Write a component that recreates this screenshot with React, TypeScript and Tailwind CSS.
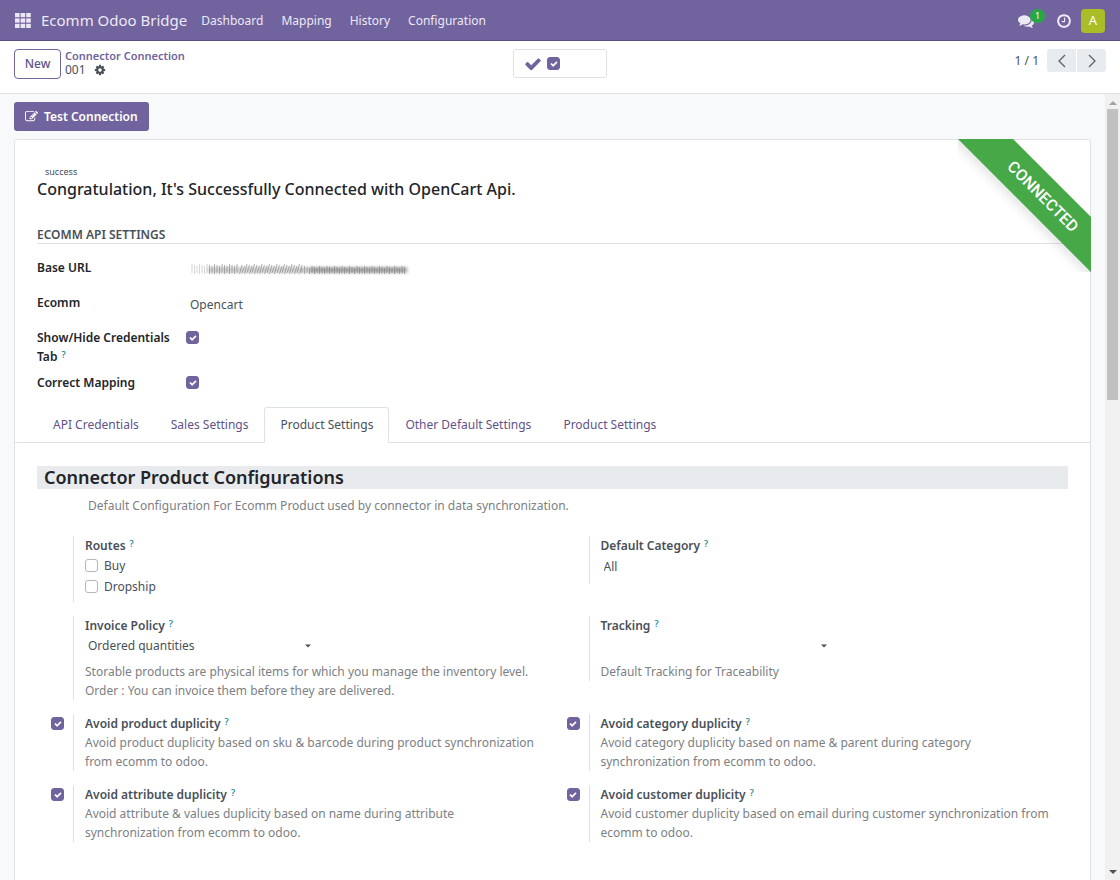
import { useId, useState } from 'react';
import type { ReactNode } from 'react';

const iconPaths = {
  edit: 'M888 1184l116-116-152-152-116 116v56h96v96h56zm440-720q-16-16-33 1l-350 350q-17 17-1 33t33-1l350-350q17-17 1-33zm80 594v190q0 119-84.5 203.5t-203.5 84.5h-832q-119 0-203.5-84.5t-84.5-203.5v-832q0-119 84.5-203.5t203.5-84.5h832q63 0 117 25 15 7 18 23 3 17-9 29l-49 49q-14 14-32 8-23-6-45-6h-832q-66 0-113 47t-47 113v832q0 66 47 113t113 47h832q66 0 113-47t47-113v-126q0-13 9-22l64-64q15-15 35-7t20 29zm-96-738l288 288-672 672h-288v-288zm444 132l-92 92-288-288 92-92q28-28 68-28t68 28l152 152q28 28 28 68t-28 68z',
  check:
    'M1671 566q0 40-28 68l-724 724-136 136q-28 28-68 28t-68-28l-136-136-362-362q-28-28-28-68t28-68l136-136q28-28 68-28t68 28l294 295 656-657q28-28 68-28t68 28l136 136q28 28 28 68z',
  clock:
    'M1024 544v448q0 14-9 23t-23 9h-320q-14 0-23-9t-9-23v-64q0-14 9-23t23-9h224v-352q0-14 9-23t23-9h64q14 0 23 9t9 23zm416 352q0-148-73-273t-198-198-273-73-273 73-198 198-73 273 73 273 198 198 273 73 273-73 198-198 73-273zm224 0q0 209-103 385.5t-279.5 279.5-385.5 103-385.5-103-279.5-279.5-103-385.5 103-385.5 279.5-279.5 385.5-103 385.5 103 279.5 279.5 103 385.5z',
  cog: 'M1152 896q0-106-75-181t-181-75-181 75-75 181 75 181 181 75 181-75 75-181zm512-109v222q0 12-8 23t-20 13l-185 28q-19 54-39 91 35 50 107 138 10 12 10 25t-9 23q-27 37-99 108t-94 71q-12 0-26-9l-138-108q-44 23-91 38-16 136-29 186-7 28-36 28h-222q-14 0-24.5-8.5t-11.5-21.5l-28-184q-49-16-90-37l-141 107q-10 9-25 9-14 0-25-11-126-114-165-168-7-10-7-23 0-12 8-23 15-21 51-66.5t54-70.5q-27-50-41-99l-183-27q-13-2-21-12.5t-8-23.5v-222q0-12 8-23t19-13l186-28q14-46 39-92-40-57-107-138-10-12-10-24 0-10 9-23 26-36 98.5-107.5t94.5-71.5q13 0 26 10l138 107q44-23 91-38 16-136 29-186 7-28 36-28h222q14 0 24.5 8.5t11.5 21.5l28 184q49 16 90 37l142-107q9-9 24-9 13 0 25 10 129 119 165 170 7 8 7 22 0 12-8 23-15 21-51 66.5t-54 70.5q26 50 41 98l183 28q13 2 21 12.5t8 23.5z',
  comments:
    'M1408 768q0 139-94 257t-256.5 186.5-353.5 68.5q-86 0-176-16-124 88-278 128-36 9-86 16h-3q-11 0-20.5-8t-11.5-21q-1-3-1-6.5t.5-6.5 2-6l2.5-5 3.5-5.5 4-5 4.5-5 4-4.5q5-6 23-25t26-29.5 22.5-29 25-38.5 20.5-44q-124-72-195-177t-71-224q0-139 94-257t256.5-186.5 353.5-68.5 353.5 68.5 256.5 186.5 94 257zm384 256q0 120-71 224.5t-195 176.5q10 24 20.5 44t25 38.5 22.5 29 26 29.5 23 25q1 1 4 4.5t4.5 5 4 5 3.5 5.5l2.5 5 2 6 .5 6.5-1 6.5q-3 14-13 22t-22 7q-50-7-86-16-154-40-278-128-90 16-176 16-271 0-472-132 58 4 88 4 161 0 309-45t264-129q125-92 192-212t67-254q0-77-23-152 129 71 204 178t75 230z',
};

function Icon({ name, className }: { name: keyof typeof iconPaths; className: string }) {
  return (
    <svg viewBox="0 0 1792 1792" fill="currentColor" aria-hidden className={className}>
      <path d={iconPaths[name]} />
    </svg>
  );
}

function Caret({ className }: { className: string }) {
  return (
    <svg viewBox="0 0 8 4" fill="currentColor" aria-hidden className={className}>
      <path d="M0 0h8L4 4z" />
    </svg>
  );
}

function Checkbox({ id, label, on = false }: { id?: string; label?: string; on?: boolean }) {
  const [checked, setChecked] = useState(on);
  return (
    <span className="grid size-[13px] shrink-0 place-items-center">
      <input
        id={id}
        type="checkbox"
        aria-label={label}
        checked={checked}
        onChange={(e) => setChecked(e.target.checked)}
        className="col-start-1 row-start-1 size-[13px] appearance-none rounded-[3px] border border-[#b4b8bd] bg-white checked:border-[#71639e] checked:bg-[#71639e]"
      />
      {checked ? (
        <Icon name="check" className="pointer-events-none col-start-1 row-start-1 size-2 text-white" />
      ) : null}
    </span>
  );
}

function Help() {
  return <sup className="-top-[3px] ml-1 text-[9px] font-medium text-[#01808f]">?</sup>;
}

const menus = ['Dashboard', 'Mapping', 'History', 'Configuration'];

function Navbar() {
  return (
    <header className="flex h-[41px] shrink-0 items-center border-b border-[#5a4f7f] bg-[#71639e] px-[15px] pt-px text-[#ece9f5]">
      <button type="button" aria-label="Apps">
        <svg viewBox="0 0 16 15" fill="currentColor" className="h-[15px] w-4">
          {[0, 5.4, 10.8].map((y) =>
            [0, 5.6, 11.2].map((x) => <rect key={`${x}-${y}`} x={x} y={y} width="4.6" height="4.2" />),
          )}
        </svg>
      </button>
      <a href="#home" className="ml-[10px] text-[15px]">
        Ecomm Odoo Bridge
      </a>
      <nav className="ml-[14px] flex gap-[18px]">
        {menus.map((m) => (
          <a key={m} href={`#${m.toLowerCase()}`}>
            {m}
          </a>
        ))}
      </nav>
      <div className="ml-auto flex items-center gap-[13px]">
        <button type="button" aria-label="Messages" className="relative flex w-[25px]">
          <Icon name="comments" className="size-4" />
          <span className="absolute -top-1 left-3 flex h-[14px] w-[15px] items-center justify-center rounded-full bg-[#28a745] text-[9px] text-white">
            1
          </span>
        </button>
        <button type="button" aria-label="Activities">
          <Icon name="clock" className="size-4" />
        </button>
        <button
          type="button"
          className="-ml-1 flex size-6 items-center justify-center rounded bg-[#a9be26] text-[13px] text-white"
        >
          A
        </button>
      </div>
    </header>
  );
}

const pagerClass = 'flex h-[23px] w-[29px] items-center justify-center bg-[#e9ecef] text-[#5c6166]';

function ControlPanel() {
  return (
    <div className="grid h-[53px] shrink-0 grid-cols-3 items-start border-b border-[#dee2e6] bg-white px-[14px] pt-2">
      <div className="flex">
        <button
          type="button"
          className="h-[30px] w-[47px] rounded border border-[#71639e] font-medium text-[#5f5389]"
        >
          New
        </button>
        <div className="ml-1 leading-[14px]">
          <a href="#connections" className="block text-[11px] font-semibold text-[#71639e]">
            Connector Connection
          </a>
          <div className="flex items-center gap-2">
            001
            <button type="button" aria-label="Actions">
              <Icon name="cog" className="size-3" />
            </button>
          </div>
        </div>
      </div>
      <div className="flex h-[29px] w-[94px] items-center gap-[5px] justify-self-center rounded-[3px] border border-[#dee2e6] pl-[10px]">
        <Icon name="check" className="size-[18px] text-[#71639e]" />
        <Checkbox label="Connected" on />
      </div>
      <div className="flex items-center justify-end">
        <span className="mr-2">1 / 1</span>
        <button type="button" aria-label="Previous" className={`${pagerClass} rounded-l-[3px]`}>
          <svg viewBox="0 0 8 14" fill="none" stroke="currentColor" strokeWidth="1.3" className="h-[14px] w-2">
            <path d="M7 1L1 7l6 6" />
          </svg>
        </button>
        <button type="button" aria-label="Next" className={`${pagerClass} ml-px rounded-r-[3px]`}>
          <svg viewBox="0 0 8 14" fill="none" stroke="currentColor" strokeWidth="1.3" className="h-[14px] w-2">
            <path d="M1 1l6 6-6 6" />
          </svg>
        </button>
      </div>
    </div>
  );
}

function Ribbon() {
  return (
    <div className="absolute -top-px -right-px size-[133px] overflow-hidden">
      <div className="absolute top-[38px] -left-[35px] flex h-[39px] w-[240px] rotate-45 items-center justify-center bg-[#46a846] font-[Roboto,sans-serif] text-[16px] font-medium text-white shadow-[0_5px_10px_rgba(0,0,0,0.1)]">
        CONNECTED
      </div>
    </div>
  );
}

function MaskedUrl() {
  return (
    <svg viewBox="0 0 224 14" role="img" aria-label="Hidden URL" className="h-[14px] w-56">
      <filter id="smear" filterUnits="userSpaceOnUse" x="0" y="0" width="224" height="14">
        <feGaussianBlur stdDeviation="0.5" />
      </filter>
      <filter id="haze" filterUnits="userSpaceOnUse" x="0" y="0" width="224" height="14">
        <feGaussianBlur stdDeviation="1.6" />
      </filter>
      <path d="M18 8H218" stroke="#8a8a8a" strokeWidth="6" opacity="0.4" filter="url(#haze)" />
      <path d="M120 8H216" stroke="#777" strokeWidth="5" opacity="0.45" filter="url(#haze)" />
      <g stroke="#777" filter="url(#smear)">
        {Array.from({ length: 86 }, (_, i) => {
          const x = 2 + i * 2.5;
          const lean = i > 18 && i < 44 ? 2.5 : 0;
          const top = i < 44 ? 2 + (i % 3) : 4 + ((i * 7) % 3);
          return (
            <path
              key={i}
              d={`M${x + lean} ${top}L${x} ${11 + (i % 2)}`}
              strokeWidth="1"
              opacity={i < 7 ? 0.3 : 0.55}
            />
          );
        })}
      </g>
    </svg>
  );
}

const tabs = ['API Credentials', 'Sales Settings', 'Product Settings', 'Other Default Settings', 'Product Settings'];

function Tabs() {
  const [active, setActive] = useState(2);
  return (
    <div role="tablist" className="flex h-9 border-b border-[#dee2e6] pl-[22px]">
      {tabs.map((tab, i) => (
        <button
          key={i}
          type="button"
          role="tab"
          aria-selected={i === active}
          onClick={() => setActive(i)}
          className={
            i === active
              ? '-mb-px rounded-t-[3px] border border-b-0 border-[#dee2e6] bg-white px-[15px] pb-px text-[#495057]'
              : 'border border-transparent px-[15px] text-[#5f5389]'
          }
        >
          {tab}
        </button>
      ))}
    </div>
  );
}

const labelClass = 'font-semibold leading-[19px] text-[#495057]';
const hintClass = 'leading-[19px] whitespace-pre-line text-[#7c8084]';

function Setting({ toggle, children }: { toggle?: ReactNode; children: ReactNode }) {
  return (
    <div className="flex items-start">
      <div className="flex w-9 shrink-0 justify-center pt-[3px] pl-[5px]">{toggle}</div>
      <div className="min-w-0 flex-1 border-l border-[#dee2e6] pl-[11px]">{children}</div>
    </div>
  );
}

function ToggleSetting({ title, hint }: { title: string; hint: string }) {
  const id = useId();
  return (
    <Setting toggle={<Checkbox id={id} on />}>
      <label htmlFor={id} className={`${labelClass} block`}>
        {title}
        <Help />
      </label>
      <p className={hintClass}>{hint}</p>
    </Setting>
  );
}

function SelectSetting({ title, options, hint }: { title: string; options: string[]; hint: string }) {
  const id = useId();
  return (
    <Setting>
      <label htmlFor={id} className={`${labelClass} block`}>
        {title}
        <Help />
      </label>
      <div className="grid w-[230px] items-center">
        <select
          id={id}
          className="col-start-1 row-start-1 h-[22px] w-full appearance-none bg-transparent pl-[3px] text-[#495057]"
        >
          {options.map((o) => (
            <option key={o}>{o}</option>
          ))}
        </select>
        <Caret className="pointer-events-none col-start-1 row-start-1 mr-1 h-1 w-[6px] justify-self-end" />
      </div>
      <p className={`${hintClass} mt-[5px]`}>{hint}</p>
    </Setting>
  );
}

function CheckOption({ label }: { label: string }) {
  return (
    <label className="flex h-[21px] items-center gap-[6px] text-[#495057]">
      <Checkbox />
      {label}
    </label>
  );
}

function Scrollbar() {
  return (
    <div aria-hidden className="flex w-[15px] shrink-0 flex-col items-center bg-[#f1f1f1]">
      <Caret className="mt-[7px] mb-1 h-1 w-2 rotate-180 text-[#a3a3a3]" />
      <div className="h-[37%] w-[11px] bg-[#c1c1c1]" />
      <Caret className="mt-auto mb-[6px] h-1 w-2 text-[#505050]" />
    </div>
  );
}

export default function App() {
  const credentialsId = useId();
  const mappingId = useId();
  const categoryId = useId();

  return (
    <div className="flex h-screen flex-col overflow-hidden bg-[#f8f9fa] font-['Noto_Sans',sans-serif] text-[12px] text-[#495057]">
      <Navbar />
      <ControlPanel />
      <div className="flex min-h-0 flex-1">
        <main className="min-w-0 flex-1 overflow-hidden px-[14px] pt-2">
          <button
            type="button"
            className="flex h-[29px] items-center gap-[6px] rounded-[3px] bg-[#71639e] px-[11px] font-semibold text-white"
          >
            <Icon name="edit" className="size-[13px]" />
            Test Connection
          </button>

          <section className="relative mt-2 min-h-full rounded-[3px] border border-[#dee2e6] bg-white">
            <Ribbon />
            <div className="px-[22px] pt-[25px]">
              <p className="pl-2 text-[9px] leading-[14px]">success</p>
              <h1 className="text-[16px] leading-5 font-medium text-[#212529]">
                Congratulation, It's Successfully Connected with OpenCart Api.
              </h1>
              <h2 className="mt-[27px] border-b border-[#dee2e6] text-[12px] leading-[17px] font-semibold text-[#495057]">
                ECOMM API SETTINGS
              </h2>

              <dl className="mt-[14px] grid grid-cols-[149px_1fr] leading-[19px]">
                <dt className="h-[35px] font-semibold text-[#212529]">Base URL</dt>
                <dd className="pt-1 pl-1">
                  <MaskedUrl />
                </dd>
                <dt className="h-[35px] font-semibold text-[#212529]">Ecomm</dt>
                <dd className="pt-[2px] pl-1">Opencart</dd>
                <dt className="h-[45px] pr-2 font-semibold text-[#212529]">
                  <label htmlFor={credentialsId}>
                    Show/Hide Credentials Tab
                    <Help />
                  </label>
                </dt>
                <dd className="pt-[3px]">
                  <Checkbox id={credentialsId} on />
                </dd>
                <dt className="h-[34px] font-semibold text-[#212529]">
                  <label htmlFor={mappingId}>Correct Mapping</label>
                </dt>
                <dd className="pt-[3px]">
                  <Checkbox id={mappingId} on />
                </dd>
              </dl>
            </div>

            <Tabs />

            <div className="px-[22px] pt-[23px]">
              <h2 className="bg-[#e9eaed] pl-[7px] text-[18px] leading-[23px] font-semibold text-[#212529]">
                Connector Product Configurations
              </h2>
              <p className={`${hintClass} mt-[7px] pl-[51px]`}>
                Default Configuration For Ecomm Product used by connector in data synchronization.
              </p>

              <div className="mt-[21px] grid grid-cols-2 items-start gap-y-[14px]">
                <Setting>
                  <fieldset className="h-[66px]">
                    <legend className={labelClass}>
                      Routes
                      <Help />
                    </legend>
                    <CheckOption label="Buy" />
                    <CheckOption label="Dropship" />
                  </fieldset>
                </Setting>
                <Setting>
                  <label htmlFor={categoryId} className={`${labelClass} block`}>
                    Default Category
                    <Help />
                  </label>
                  <input
                    id={categoryId}
                    type="text"
                    defaultValue="All"
                    className="mb-[7px] block h-[22px] w-[230px] pl-[3px] text-[#495057] outline-none"
                  />
                </Setting>
                <SelectSetting
                  title="Invoice Policy"
                  options={['Ordered quantities', 'Delivered quantities']}
                  hint={
                    'Storable products are physical items for which you manage the inventory level.\nOrder : You can invoice them before they are delivered.'
                  }
                />
                <SelectSetting
                  title="Tracking"
                  options={['', 'By Lots', 'By Unique Serial Number']}
                  hint="Default Tracking for Traceability"
                />
                <ToggleSetting
                  title="Avoid product duplicity"
                  hint={'Avoid product duplicity based on sku & barcode during product synchronization\nfrom ecomm to odoo.'}
                />
                <ToggleSetting
                  title="Avoid category duplicity"
                  hint={'Avoid category duplicity based on name & parent during category\nsynchronization from ecomm to odoo.'}
                />
                <ToggleSetting
                  title="Avoid attribute duplicity"
                  hint={'Avoid attribute & values duplicity based on name during attribute\nsynchronization from ecomm to odoo.'}
                />
                <ToggleSetting
                  title="Avoid customer duplicity"
                  hint={'Avoid customer duplicity based on email during customer synchronization from\necomm to odoo.'}
                />
              </div>
            </div>
          </section>
        </main>
        <Scrollbar />
      </div>
    </div>
  );
}
